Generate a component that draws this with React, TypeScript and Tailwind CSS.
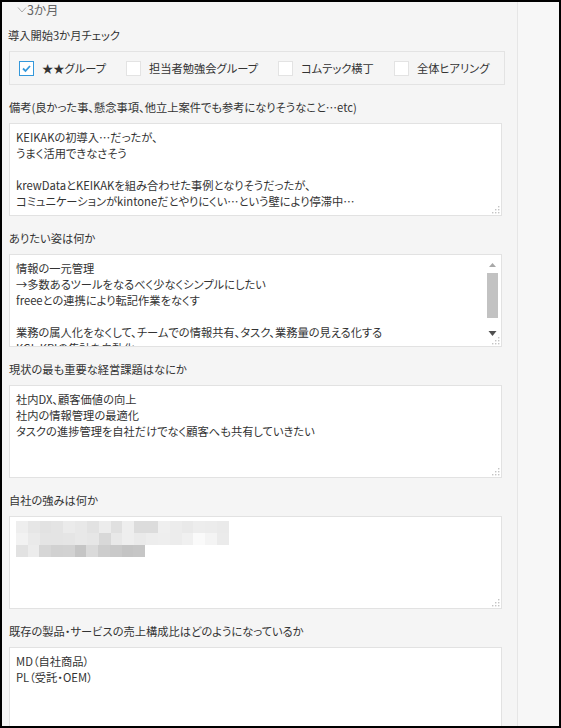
import React from "react";

function Grip() {
  return (
    <svg className="absolute right-[1px] bottom-[1px]" width="8" height="8" viewBox="0 0 8 8">
      <rect x="6" y="0" width="1.4" height="1.4" fill="#c4c4c4" />
      <rect x="3" y="3" width="1.4" height="1.4" fill="#c4c4c4" />
      <rect x="6" y="3" width="1.4" height="1.4" fill="#c4c4c4" />
      <rect x="0" y="6" width="1.4" height="1.4" fill="#c4c4c4" />
      <rect x="3" y="6" width="1.4" height="1.4" fill="#c4c4c4" />
      <rect x="6" y="6" width="1.4" height="1.4" fill="#c4c4c4" />
    </svg>
  );
}

function Scrollbar() {
  return (
    <div className="absolute right-[2px] top-[1px] bottom-[8px] w-[13px] flex flex-col items-center">
      <svg width="9" height="14" viewBox="0 0 9 14" className="mt-[3px]">
        <path d="M1 8 L4.5 4 L8 8 Z" fill="#a8a8a8" />
      </svg>
      <div className="w-[11px] h-[45px] bg-[#c2c2c2]" />
      <div className="flex-1" />
      <svg width="9" height="10" viewBox="0 0 9 10">
        <path d="M0.5 3 L8.5 3 L4.5 8 Z" fill="#505050" />
      </svg>
    </div>
  );
}

function TextBox({ children, scroll }: { children?: React.ReactNode; scroll?: boolean }) {
  return (
    <div className="relative w-[493px] h-[93px] bg-white border border-[#e2e2e2] overflow-hidden">
      <div className="pl-[6px] pt-[5px] pr-[20px] text-[11.25px] leading-[16px] text-[#333] whitespace-pre-line">
        {children}
      </div>
      {scroll && <Scrollbar />}
      <Grip />
    </div>
  );
}

function Field({ label, children }: { label: string; children: React.ReactNode }) {
  return (
    <div className="pt-[14px]">
      <div className="h-[16px] leading-[16px] text-[11.25px] text-[#333] mb-[8px] whitespace-nowrap">{label}</div>
      {children}
    </div>
  );
}

function Check({ checked, label }: { checked?: boolean; label: string }) {
  return (
    <div className="flex items-center whitespace-nowrap">
      {checked ? (
        <div className="w-[15px] h-[15px] border border-[#3498db] bg-white flex items-center justify-center">
          <svg width="11" height="11" viewBox="0 0 11 11">
            <path d="M2 5.5 L4.5 8 L9 3" stroke="#3498db" strokeWidth="1.8" fill="none" />
          </svg>
        </div>
      ) : (
        <div className="w-[15px] h-[15px] border border-[#e3e3e3] bg-white" />
      )}
      <span className="ml-[8px] text-[11.25px] text-[#333]">{label}</span>
    </div>
  );
}

const row1 = [
  "bg-[#eeeeee]", "bg-[#e6e6e6]", "bg-[#e2e2e2]", "bg-[#e4e4e4]", "bg-[#ebebeb]", "bg-[#e8e8e8]",
  "bg-[#e2e2e2]", "bg-[#ececec]", "bg-[#e0e0e0]", "bg-[#eeeeee]", "bg-[#dcdcdc]", "bg-[#dcdcdc]",
  "bg-[#efefef]", "bg-[#ececec]", "bg-[#e9e9e9]", "bg-[#ededed]", "bg-[#ececec]", "bg-[#eaeaea]",
];
const row2 = [
  "bg-[#f2f2f2]", "bg-[#eaeaea]", "bg-[#e4e4e4]", "bg-[#e4e4e4]", "bg-[#e5e5e5]", "bg-[#e8e8e8]",
  "bg-[#e6e6e6]", "bg-[#d8d8d8]", "bg-[#e8e8e8]", "bg-[#eeeeee]", "bg-[#eaeaea]", "bg-[#ededed]",
  "bg-[#eeeeee]", "bg-[#ececec]", "bg-[#f0f0f0]", "bg-[#fafafa]", "bg-[#f4f4f4]", "bg-[#ebebeb]",
];
const row3 = [
  "bg-[#e2e2e2]", "bg-[#ececec]", "bg-[#d6d6d6]", "bg-[#d1d1d1]", "bg-[#d2d2d2]", "bg-[#c5c5c5]",
  "bg-[#dadada]", "bg-[#cdcdcd]", "bg-[#c9c9c9]", "bg-[#c4c4c4]", "bg-[#c6c6c6]",
];

function Mosaic() {
  return (
    <div className="pt-[4px] pl-[1px]">
      <div className="flex w-[213px] h-[12px]">
        {row1.map((c, i) => (
          <div key={i} className={"flex-1 " + c} />
        ))}
      </div>
      <div className="flex w-[213px] h-[12px]">
        {row2.map((c, i) => (
          <div key={i} className={"flex-1 " + c} />
        ))}
      </div>
      <div className="flex w-[129px] h-[12px]">
        {row3.map((c, i) => (
          <div key={i} className={"flex-1 " + c} />
        ))}
      </div>
    </div>
  );
}

export default function App() {
  return (
    <div className="w-[561px] h-[728px] border-2 border-black bg-[#f5f5f5] overflow-hidden flex font-['Noto_Sans_CJK_JP',sans-serif] [font-feature-settings:'palt']">
      <div className="w-[516px] h-full border-r border-[#e6e6e6] pl-[7px]">
        <div className="h-[16px] flex items-center text-[12.5px] text-[#666]">
          <svg width="10" height="8" viewBox="0 0 10 8" className="ml-[8px]">
            <path d="M1 1.5 L5 6 L9 1.5" stroke="#aaa" strokeWidth="1" fill="none" />
          </svg>
          <span>3か月</span>
        </div>
        <div className="mt-[9px] h-[16px] leading-[16px] text-[11.25px] text-[#333] -ml-[1px]">導入開始3か月チェック</div>
        <div className="mt-[8px] w-[496px] h-[34px] border border-[#e3e3e3] flex items-center pl-[9px] gap-[20px]">
          <Check checked label="★★グループ" />
          <Check label="担当者勉強会グループ" />
          <Check label="コムテック横丁" />
          <Check label="全体ヒアリング" />
        </div>
        <div>
          <Field label="備考(良かった事、懸念事項、他立上案件でも参考になりそうなこと…etc)">
            <TextBox>
              {"KEIKAKの初導入…だったが、\nうまく活用できなさそう\n\u00a0\nkrewDataとKEIKAKを組み合わせた事例となりそうだったが、\nコミュニケーションがkintoneだとやりにくい…という壁により停滞中…"}
            </TextBox>
          </Field>
          <Field label="ありたい姿は何か">
            <TextBox scroll>
              {"情報の一元管理\n→多数あるツールをなるべく少なくシンプルにしたい\nfreeeとの連携により転記作業をなくす\n\u00a0\n業務の属人化をなくして、チームでの情報共有、タスク、業務量の見える化する\nKGI・KPIの集計を自動化"}
            </TextBox>
          </Field>
          <Field label="現状の最も重要な経営課題はなにか">
            <TextBox>
              {"社内DX、顧客価値の向上\n社内の情報管理の最適化\nタスクの進捗管理を自社だけでなく顧客へも共有していきたい"}
            </TextBox>
          </Field>
          <Field label="自社の強みは何か">
            <div className="relative w-[493px] h-[93px] bg-white border border-[#e2e2e2] overflow-hidden pl-[5px]">
              <Mosaic />
              <Grip />
            </div>
          </Field>
          <Field label="既存の製品・サービスの売上構成比はどのようになっているか">
            <TextBox>{"MD（自社商品）\nPL（受託・OEM）"}</TextBox>
          </Field>
        </div>
      </div>
      <div className="flex-1 bg-[#f7f7f7]" />
    </div>
  );
}
